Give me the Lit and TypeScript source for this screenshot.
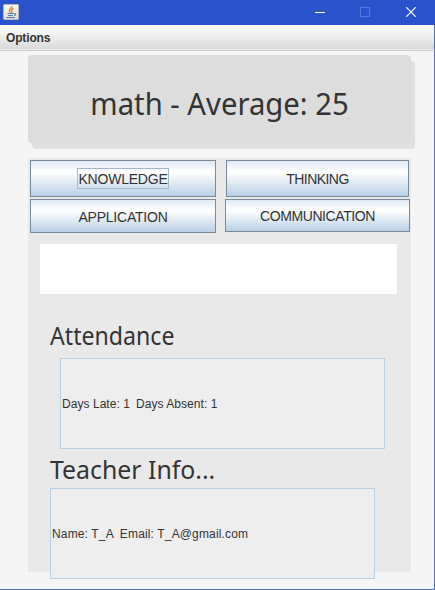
import { LitElement, html, css } from "lit";
import { customElement } from "lit/decorators.js";

@customElement("title-bar")
class TitleBar extends LitElement {
  static styles = css`
    :host { display: flex; align-items: flex-start; height: 25px; background: #2a52cb; }
    svg { display: block; shape-rendering: crispEdges; }
    .logo { margin: 4px auto 0 3px; shape-rendering: auto; }
    .min { margin-top: 12px; }
    .max { margin: 7px 36px 0 35px; }
    .close { margin: 7px 19px 0 0; shape-rendering: auto; }
  `;
  render() {
    return html`
      <svg class="logo" width="16" height="16" viewBox="0 0 16 16">
        <defs>
          <linearGradient id="tile" x1="0" y1="0" x2="0" y2="1">
            <stop offset="0" stop-color="#f8f8f6" /><stop offset="1" stop-color="#dededc" />
          </linearGradient>
        </defs>
        <rect x=".5" y=".5" width="15" height="15" rx="1" fill="url(#tile)" stroke="#b9b9b4" />
        <path d="M8.800 2C9.800 4 5.900 4.800 6.300 6.500c.2.900 1.200 1.300 1.200 2.200M10.700 4.300C8.700 5.200 8 5.900 8.800 7c.4.600.2 1.200-.3 1.700" fill="none" stroke="#e5822a" stroke-width="1.350" />
        <path d="M4.500 9.500h6M5 11.500h5M3.500 13.500h8.500M10.800 9.500c2.400-.3 2.400 1.600.4 2" fill="none" stroke="#527a9b" stroke-width="1.100" />
      </svg>
      <svg class="min" width="10" height="1"><rect width="10" height="1" fill="#fff" /></svg>
      <svg class="max" width="10" height="10"><rect x=".5" y=".5" width="9" height="9" fill="none" stroke="#5575d9" /></svg>
      <svg class="close" width="10" height="10"><path d="M.2.2l9.600 9.600M9.800.2L.2 9.800" stroke="#fff" stroke-width="1.200" /></svg>
    `;
  }
}

@customElement("metal-button")
class MetalButton extends LitElement {
  static styles = css`
    :host {
      display: flex; align-items: center; justify-content: center; box-sizing: border-box;
      border: 1px solid #7a8a99;
      background: linear-gradient(#dde8f3 0%, #fff 30%, #fff 34%, #b8cfe5 100%);
      font: 14px/16px "Liberation Sans", Arial, sans-serif; color: #333;
    }
    .label { border: 1px solid transparent; height: 19px; line-height: 20px; white-space: nowrap; }
    :host([focused]) .label { border-color: #a3b8cc; }
  `;
  render() {
    return html`<span class="label"><slot></slot></span>`;
  }
}

@customElement("app-root")
class AppRoot extends LitElement {
  static styles = css`
    :host {
      display: flex; flex-direction: column; box-sizing: border-box; width: 435px; height: 590px;
      background: #f5f5f5; color: #333; overflow: hidden;
      font: 12px/16px "Liberation Sans", Arial, sans-serif;
    }
    .menu {
      box-sizing: border-box; height: 26px; padding: 5px 6px 0; font-weight: bold; letter-spacing: -.15px;
      background: linear-gradient(#fff, #dadada 24px, #eee 24px);
      border-bottom: 1px solid #ccc; border-right: 1px solid #4a6dc4;
    }
    .content {
      flex: 1; box-sizing: border-box; padding: 4px 23px 0 28px;
      border-right: 1px solid #5470c6; border-bottom: 1px solid #5470b6;
    }
    .banner {
      height: 88px; border-radius: 4px; background: #ddd; box-shadow: 4px 6px 0 #e1e1e1;
      display: flex; justify-content: center;
    }
    .heading { font-family: "Noto Sans", "Open Sans", sans-serif; white-space: nowrap; }
    .title { font-size: 30px; line-height: 40px; margin-top: 29px; transform: scaleX(.975); }
    .panel { margin-top: 15px; height: 414px; background: #e9e9e9; display: flex; flex-direction: column; }
    .row { display: flex; padding: 2px 0 0 2px; }
    .knowledge { width: 186px; height: 37px; margin-right: 10px; letter-spacing: -.2px; }
    .thinking { width: 183px; height: 37px; letter-spacing: -.55px; }
    .application { width: 186px; height: 34px; margin-right: 9px; letter-spacing: -.22px; }
    .communication { width: 185px; height: 33px; letter-spacing: -.42px; }
    .blank { margin: 11px 14px 0 12px; height: 50px; flex: none; background: #fff; }
    .section { font-size: 26px; line-height: 36px; margin-left: 22px; transform-origin: left; }
    .attendance { margin-top: 23px; transform: scaleX(.89); }
    .teacher { margin-top: 2px; transform: scaleX(.955); }
    .info {
      box-sizing: border-box; width: 325px; height: 91px; flex: none; padding: 0 1px;
      border: 1px solid #b8cfe5; background: #eee; display: flex; align-items: center; gap: 6px;
    }
    .late { margin: 5px 0 0 32px; letter-spacing: .05px; }
    .contact { margin: 1px 0 0 22px; letter-spacing: .15px; }
  `;
  render() {
    return html`
      <title-bar></title-bar>
      <div class="menu">Options</div>
      <div class="content">
        <div class="banner"><div class="heading title">math - Average: 25</div></div>
        <div class="panel">
          <div class="row">
            <metal-button class="knowledge" focused>KNOWLEDGE</metal-button>
            <metal-button class="thinking">THINKING</metal-button>
          </div>
          <div class="row">
            <metal-button class="application">APPLICATION</metal-button>
            <metal-button class="communication">COMMUNICATION</metal-button>
          </div>
          <div class="blank"></div>
          <div class="heading section attendance">Attendance</div>
          <div class="info late"><span>Days Late: 1</span><span>Days Absent: 1</span></div>
          <div class="heading section teacher">Teacher Info...</div>
          <div class="info contact"><span>Name: T_A</span><span>Email: T_A@gmail.com</span></div>
        </div>
      </div>
    `;
  }
}
